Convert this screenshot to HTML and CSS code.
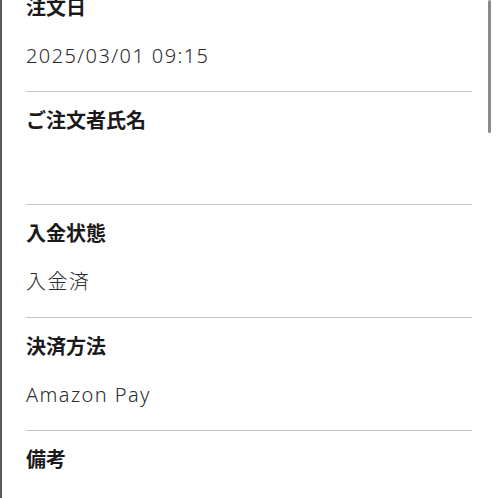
FILE: index.html
```html
<!doctype html>
<html lang="ja">
  <head>
    <meta charset="utf-8">
    <title>注文詳細</title>
    <link rel="stylesheet" href="styles.css">
  </head>
  <body>
    <div class="page">
      <div class="scrollbar"></div>
      <div class="details">
        <div class="field">
          <div class="label">注文日</div>
          <div class="value">2025/03/01 09:15</div>
        </div>
        <div class="field">
          <div class="label">ご注文者氏名</div>
          <div class="value">&nbsp;</div>
        </div>
        <div class="field">
          <div class="label">入金状態</div>
          <div class="value">入金済</div>
        </div>
        <div class="field">
          <div class="label">決済方法</div>
          <div class="value">Amazon Pay</div>
        </div>
        <div class="field">
          <div class="label">備考</div>
          <div class="value">&nbsp;</div>
        </div>
      </div>
    </div>
  </body>
</html>
```

FILE: styles.css
```css
html,
body {
  margin: 0;
  height: 100%;
  background: #ffffff;
}

.page {
  position: relative;
  height: 100vh;
  overflow: hidden;
  border-left: 2px solid #5a5a5a;
  box-sizing: border-box;
}

.scrollbar {
  position: absolute;
  top: 0;
  right: 7px;
  width: 3px;
  height: 133px;
  border-radius: 2px;
  background: #8a8a8a;
}

.details {
  margin-top: -22px;
  padding: 0 26px 0 24px;
}

.field {
  border-top: 1px solid #c6c6c6;
  padding: 14px 0 21px;
}

.label {
  font-family: "Noto Sans CJK JP", sans-serif;
  font-size: 20px;
  font-weight: 700;
  line-height: 28px;
  color: #1a1a1a;
}

.value {
  margin-top: 21px;
  font-family: "Noto Sans", "Noto Sans CJK JP", sans-serif;
  font-size: 20px;
  font-weight: 300;
  line-height: 28px;
  letter-spacing: 1.4px;
  color: #2b2b2b;
}
```
